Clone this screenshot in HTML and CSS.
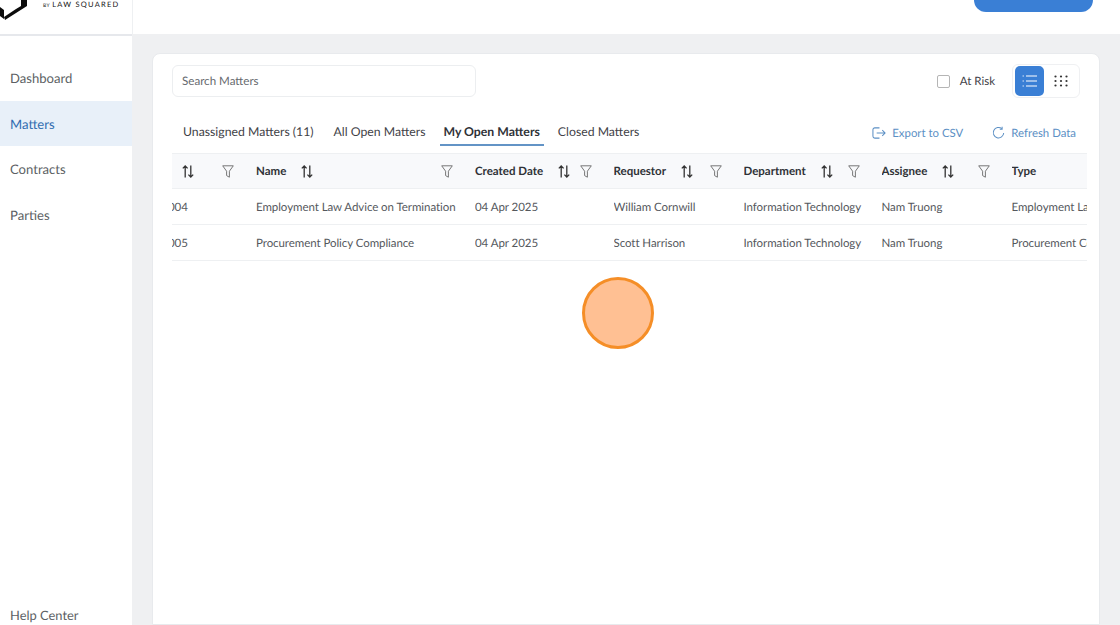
FILE: index.html
```html
<!DOCTYPE html>
<html lang="en">
<head>
    <meta charset="UTF-8">
    <title>Matters</title>
    <link rel="stylesheet" href="styles.css">
</head>
<body>

<div class="app">
    <header class="topbar">
        <div class="brand">
            <svg class="logo" width="30" height="20" viewBox="0 0 30 20">
                <path d="M0 7 L4 10 L4 19 L0 16 Z M21 0 L27 0 L27 6 L5 20 L4 17 L16 9 L21 6 Z" fill="#0c0c0c"/>
            </svg>
            <span class="by">BY</span>
            <span class="law">LAW SQUARED</span>
        </div>
        <div class="topbar-main">
            <div class="page-title">Matter Management</div>
            <button class="new-btn"></button>
        </div>
    </header>

    <div class="body-row">
        <nav class="sidebar">
            <a class="nav-item">Dashboard</a>
            <a class="nav-item active">Matters</a>
            <a class="nav-item">Contracts</a>
            <a class="nav-item">Parties</a>
            <a class="nav-item help">Help Center</a>
        </nav>

        <main class="content">
            <section class="card">
                <div class="toolbar">
                    <div class="search">Search Matters</div>
                    <div class="toolbar-right">
                        <span class="checkbox"></span>
                        <span class="risk-label">At Risk</span>
                        <div class="view-toggle">
                            <span class="view-btn selected">
                                <svg width="16" height="14" viewBox="0 0 16 14" fill="none" stroke="#fff" stroke-width="1.2">
                                    <path d="M4 2h11M4 7h11M4 12h11"/>
                                    <path d="M.6 2h1.2M.6 7h1.2M.6 12h1.2"/>
                                </svg>
                            </span>
                            <span class="view-btn">
                                <svg width="14" height="12" viewBox="0 0 14 12" fill="#333">
                                    <circle cx="1.5" cy="1.5" r="1.1"/><circle cx="7" cy="1.5" r="1.1"/><circle cx="12.5" cy="1.5" r="1.1"/>
                                    <circle cx="1.5" cy="6" r="1.1"/><circle cx="7" cy="6" r="1.1"/><circle cx="12.5" cy="6" r="1.1"/>
                                    <circle cx="1.5" cy="10.5" r="1.1"/><circle cx="7" cy="10.5" r="1.1"/><circle cx="12.5" cy="10.5" r="1.1"/>
                                </svg>
                            </span>
                        </div>
                    </div>
                </div>

                <div class="tabs-row">
                    <div class="tabs">
                        <span class="tab first">Unassigned Matters (11)</span>
                        <span class="tab">All Open Matters</span>
                        <span class="tab current">My Open Matters</span>
                        <span class="tab">Closed Matters</span>
                    </div>
                    <div class="actions">
                        <a class="action">
                            <svg width="14" height="14" viewBox="0 0 15 14" fill="none" stroke="#5b8fc4" stroke-width="1.1">
                                <path d="M8 1.5H3a2 2 0 0 0-2 2v7a2 2 0 0 0 2 2h5"/>
                                <path d="M5 7h9M11 4l3 3-3 3"/>
                            </svg>
                            Export to CSV
                        </a>
                        <a class="action">
                            <svg width="13" height="14" viewBox="0 0 14 14" fill="none" stroke="#5b8fc4" stroke-width="1.1">
                                <path d="M10.6 2.4A5.6 5.6 0 1 0 12.6 7"/>
                                <path d="M10.9 0.4v2.5H8.4"/>
                            </svg>
                            Refresh Data
                        </a>
                    </div>
                </div>

                <div class="table">
                    <div class="row head">
                        <div class="cell c-id"><svg class="sort"><use href="#sort"/></svg><svg class="filter"><use href="#filter"/></svg></div>
                        <div class="cell c-name"><b>Name</b><svg class="sort"><use href="#sort"/></svg><svg class="filter"><use href="#filter"/></svg></div>
                        <div class="cell c-date"><b>Created Date</b><svg class="sort"><use href="#sort"/></svg><svg class="filter"><use href="#filter"/></svg></div>
                        <div class="cell c-req"><b>Requestor</b><svg class="sort"><use href="#sort"/></svg><svg class="filter"><use href="#filter"/></svg></div>
                        <div class="cell c-dept"><b>Department</b><svg class="sort"><use href="#sort"/></svg><svg class="filter"><use href="#filter"/></svg></div>
                        <div class="cell c-asg"><b>Assignee</b><svg class="sort"><use href="#sort"/></svg><svg class="filter"><use href="#filter"/></svg></div>
                        <div class="cell c-type"><b>Type</b></div>
                    </div>
                    <div class="row">
                        <div class="cell c-id clip">004</div>
                        <div class="cell c-name">Employment Law Advice on Termination</div>
                        <div class="cell c-date">04 Apr 2025</div>
                        <div class="cell c-req">William Cornwill</div>
                        <div class="cell c-dept">Information Technology</div>
                        <div class="cell c-asg">Nam Truong</div>
                        <div class="cell c-type">Employment Law</div>
                    </div>
                    <div class="row">
                        <div class="cell c-id clip">005</div>
                        <div class="cell c-name">Procurement Policy Compliance</div>
                        <div class="cell c-date">04 Apr 2025</div>
                        <div class="cell c-req">Scott Harrison</div>
                        <div class="cell c-dept">Information Technology</div>
                        <div class="cell c-asg">Nam Truong</div>
                        <div class="cell c-type">Procurement Contract</div>
                    </div>
                </div>
            </section>
        </main>
    </div>

    <div class="click-marker"></div>
</div>

<svg class="defs" width="0" height="0">
    <symbol id="sort" viewBox="0 0 12 13">
        <path d="M3.2 12.5V1M.8 3.4 3.2 1l2.4 2.4M8.8.5V12M6.4 9.6 8.8 12l2.4-2.4" fill="none" stroke="#333" stroke-width="1.3"/>
    </symbol>
    <symbol id="filter" viewBox="0 0 12 13">
        <path d="M.7.8h10.6L7.4 6.2v6L4.6 10.6V6.2Z" fill="none" stroke="#777" stroke-width="1"/>
    </symbol>
</svg>

</body>
</html>
```

FILE: styles.css
```css
* {
    box-sizing: border-box;
}
html, body {
    margin: 0;
    height: 100%;
    overflow: hidden;
}
body {
    font-family: "Lato", "Liberation Sans", sans-serif;
    background-color: #fff;
    color: #55585d;
    text-rendering: geometricPrecision;
}
.app {
    position: relative;
    width: 1120px;
    height: 625px;
    overflow: hidden;
    display: flex;
    flex-direction: column;
}

/* top bar */
.topbar {
    height: 34px;
    flex: none;
    display: flex;
}
.brand {
    width: 133px;
    flex: none;
    height: 36px;
    border-bottom: 2px solid #e6e8ec;
    border-right: 1px solid #eef0f2;
    display: flex;
    align-items: flex-start;
    overflow: hidden;
}
.logo {
    flex: none;
    display: block;
}
.by {
    font-size: 5px;
    letter-spacing: .5px;
    color: #222;
    margin: 3px 0 0 13px;
}
.law {
    font-size: 7.5px;
    font-weight: 400;
    letter-spacing: 1.25px;
    color: #111;
    margin: 0 0 0 2px;
    white-space: nowrap;
}
.topbar-main {
    flex: 1;
    display: flex;
    justify-content: space-between;
    padding: 0 27px 0 24px;
}
.page-title {
    font-size: 17px;
    font-weight: 700;
    color: #2f3237;
    margin-top: -20px;
    line-height: 22px;
}
.new-btn {
    width: 119px;
    height: 12px;
    border: none;
    border-radius: 0 0 14px 14px;
    background-color: #3a7fd5;
    padding: 0;
}

.body-row {
    flex: 1;
    display: flex;
    min-height: 0;
}

/* sidebar */
.sidebar {
    width: 132px;
    flex: none;
    display: flex;
    flex-direction: column;
    padding-top: 21px;
    font-size: 13.1px;
}
.nav-item {
    height: 45.5px;
    line-height: 46.5px;
    padding-left: 10px;
    color: #5c5f64;
}
.nav-item.active {
    background-color: #e8f0f9;
    color: #2f6cb0;
}
.help {
    margin-top: auto;
    height: 20px;
    line-height: 20px;
    font-size: 12.9px;
}

/* main */
.content {
    flex: 1;
    background-color: #eff0f2;
    padding: 19px 20px 0;
    min-width: 0;
}
.card {
    background-color: #fff;
    border: 1px solid #e8eaed;
    border-radius: 8px 8px 0 0;
    height: 100%;
    padding: 11px 12px 0 19px;
}
.toolbar {
    display: flex;
    justify-content: space-between;
    align-items: center;
    height: 32px;
    margin-right: 7px;
}
.search {
    width: 304px;
    height: 32px;
    border: 1px solid #eceef0;
    border-radius: 6px;
    font-size: 11.6px;
    line-height: 31px;
    padding-left: 9px;
    color: #66696e;
}
.toolbar-right {
    display: flex;
    align-items: center;
}
.checkbox {
    width: 13px;
    height: 13px;
    border: 1.5px solid #b5b5b5;
    border-radius: 2px;
    margin-right: 10px;
}
.risk-label {
    font-size: 11.5px;
    color: #3f4247;
    margin-right: 17px;
}
.view-toggle {
    display: flex;
    border: 1px solid #eff0f2;
    border-radius: 6px;
    height: 34px;
    padding: 1px;
    width: 68px;
}
.view-btn {
    width: 30px;
    height: 30px;
    display: flex;
    align-items: center;
    justify-content: center;
    border-radius: 5px;
    margin-left: 1px;
}
.view-btn.selected {
    background-color: #3a7fd5;
    width: 29px;
}
.view-btn:last-child {
    margin-left: 2px;
}

/* tabs */
.tabs-row {
    display: flex;
    justify-content: space-between;
    margin-top: 20px;
    height: 36px;
    padding-right: 11px;
}
.tabs {
    display: flex;
    gap: 10px;
    padding-left: 7px;
}
.tab {
    font-size: 12.25px;
    line-height: 18px;
    padding: 6px 4px 0;
    color: #3f4247;
    height: 29px;
}
.tab.first {
    margin-right: 2px;
}
.tab.current {
    font-weight: 700;
    color: #2f3237;
    border-bottom: 2px solid #6394c6;
}
.actions {
    display: flex;
    gap: 29px;
    padding-top: 9px;
}
.action {
    display: flex;
    align-items: flex-start;
    gap: 6px;
    font-size: 11.4px;
    line-height: 15px;
    color: #5b8fc4;
}

/* table */
.table {
    overflow: hidden;
    font-size: 11.5px;
    letter-spacing: -.06px;
}
.row {
    display: flex;
    height: 36px;
    align-items: center;
    border-bottom: 1px solid #eef0f2;
    white-space: nowrap;
    padding-top: 1px;
}
.row.head {
    background-color: #f8f9fb;
    border-top: 1px solid #eef0f2;
    color: #2f3237;
    letter-spacing: 0;
    padding-top: 0;
}
.cell {
    flex: none;
    display: flex;
    align-items: center;
    overflow: hidden;
    height: 100%;
}
.sort {
    width: 12px;
    height: 13px;
    flex: none;
    margin-left: 15px;
}
.filter {
    width: 12px;
    height: 13px;
    flex: none;
    margin-left: auto;
    margin-right: 22px;
}
.defs {
    position: absolute;
}
.c-id {
    width: 84px;
    padding-left: 10px;
}
.c-id .sort {
    margin-left: 0;
}
.clip {
    padding-left: 0;
    text-indent: -4px;
}
.c-name {
    width: 219px;
}
.c-date {
    width: 138.5px;
}
.c-req {
    width: 130px;
}
.c-dept {
    width: 138px;
}
.c-asg {
    width: 130px;
}
.c-type {
    flex: 1;
}

/* orange click highlight over the page */
.click-marker {
    position: absolute;
    left: 582px;
    top: 277px;
    width: 72px;
    height: 72px;
    border-radius: 50%;
    background-color: #ffc093;
    border: 3px solid #f58e27;
}
```
